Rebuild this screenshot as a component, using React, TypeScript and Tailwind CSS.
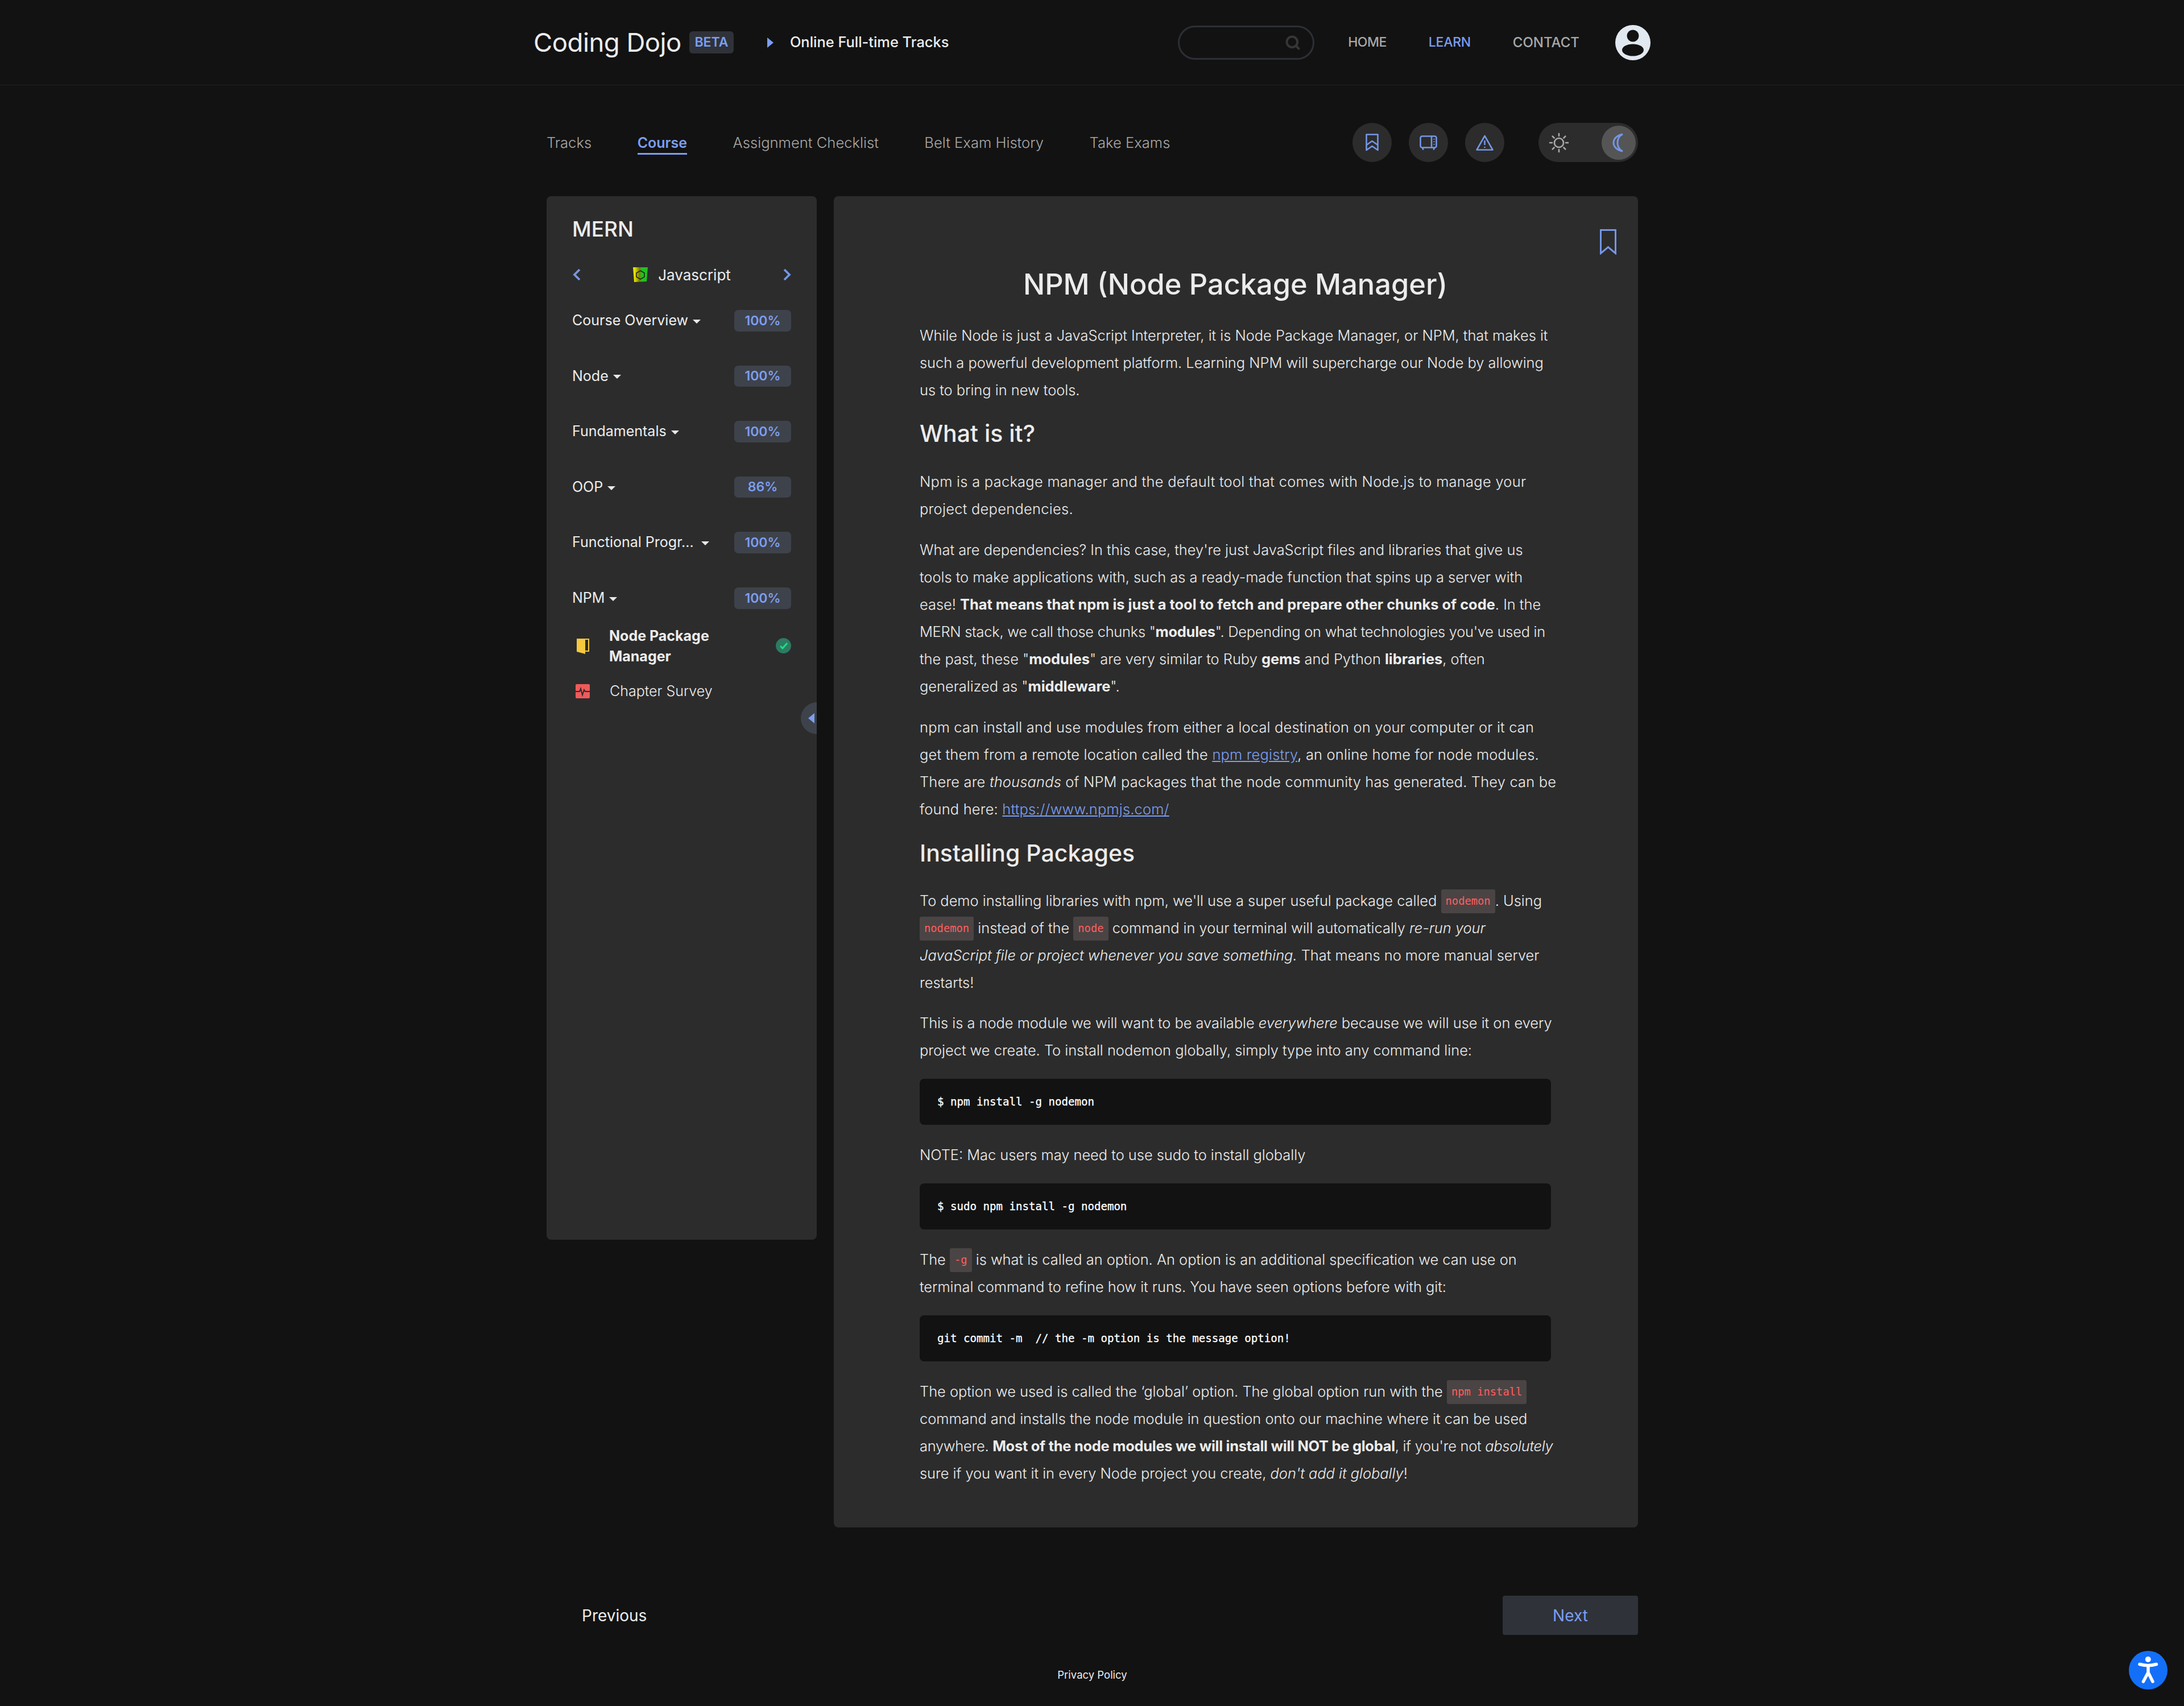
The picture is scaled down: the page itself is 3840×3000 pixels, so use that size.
import { Search } from "lucide-react";

const tabs = ["Tracks", "Course", "Assignment Checklist", "Belt Exam History", "Take Exams"];
const chapters = [
    { name: "Course Overview", pct: "100%" },
    { name: "Node", pct: "100%" },
    { name: "Fundamentals", pct: "100%" },
    { name: "OOP", pct: "86%" },
    { name: "Functional Progr...", pct: "100%" },
    { name: "NPM", pct: "100%" },
];

function Code({ children }: { children: React.ReactNode }) {
    return (
        <code className="inline-block h-[42px] align-middle -mt-[3px] rounded-[3px] bg-[#4b4444] px-[8px] font-['DejaVu_Sans_Mono',monospace] text-[18.8px] leading-[42px] tracking-normal font-normal text-[#ff5f5f] not-italic">
            {children}
        </code>
    );
}

function Block({ children }: { children: React.ReactNode }) {
    return (
        <pre className="mt-[26px] mb-[29px] flex h-[81px] items-center rounded-[8px] bg-[#121212] px-[31px] font-['DejaVu_Sans_Mono',monospace] text-[19.1px] font-normal tracking-normal text-white [-webkit-text-stroke:0.3px_#ffffff]">
            {children}
        </pre>
    );
}

export default function App() {
    return (
        <div className="flex h-[3000px] w-[3840px] flex-col overflow-hidden bg-[#121212] font-['Inter',sans-serif] text-[#ececec]">
            <header className="h-[150px] shrink-0 border-b border-[#222222]">
                <div className="mx-auto flex h-full w-[1964px] items-center">
                    <span className="text-[45.500px] leading-none tracking-[-0.5px]">Coding Dojo</span>
                    <span className="ml-[14px] flex h-[39px] w-[78px] items-center justify-center rounded-[6px] bg-[#2f3238] text-[23px] font-semibold text-[#7c9ef0]">BETA</span>
                    <span className="ml-[59px] h-0 w-0 border-y-[9px] border-l-[11px] border-y-transparent border-l-[#7c9ef0]" />
                    <span className="ml-[29px] text-[25.400px] font-medium">Online Full-time Tracks</span>
                    <div className="ml-auto flex h-[60px] w-[240px] items-center justify-end rounded-full border-[3px] border-[#2c2f36] pr-[21px]">
                        <Search size={28} strokeWidth={3.4} className="text-[#363636]" />
                    </div>
                    <nav className="ml-[59px] flex items-center gap-[74px] text-[24px] font-medium text-[#a8a8a8]">
                        <span className="text-[23px] tracking-[-0.5px]">HOME</span>
                        <span className="text-[23px] tracking-[-0.3px] text-[#7c9ef0]">LEARN</span>
                        <span>CONTACT</span>
                    </nav>
                    <svg className="ml-[63px]" width="62" height="62" viewBox="0 0 62 62">
                        <circle cx="31" cy="31" r="31" fill="#e2e8f0" />
                        <circle cx="31" cy="19" r="10.5" fill="#121212" />
                        <ellipse cx="31" cy="44" rx="19" ry="10.5" fill="#121212" />
                    </svg>
                </div>
            </header>

            <div className="mx-auto flex w-[1920px] flex-1 flex-col pl-[1px]">
                <div className="flex h-[195px] shrink-0 items-center pt-[6px]">
                    <div className="flex gap-[80.500px] pt-[4px] text-[25.600px] font-[350] text-[#a8a8a8]">
                        {tabs.map((tab) => (
                            <span key={tab} className={tab === "Course" ? "border-b-[3px] border-[#7c9ef0] text-[25px] font-semibold leading-[36px] text-[#7c9ef0]" : "leading-[36px]"}>
                                {tab}
                            </span>
                        ))}
                    </div>
                    <div className="ml-auto flex items-center gap-[30px]">
                        <div className="flex h-[69px] w-[69px] items-center justify-center rounded-full bg-[#2c2c2c]">
                            <svg width="23" height="31" viewBox="0 0 23 31" fill="none" stroke="#7496e6" strokeWidth="2.6" strokeLinejoin="round">
                                <path d="M1.500 1.500h20v27.500l-10-7-10 7z" />
                                <path d="M1.500 20l10-7 10 7" />
                            </svg>
                        </div>
                        <div className="flex h-[69px] w-[69px] items-center justify-center rounded-full bg-[#2c2c2c]">
                            <svg width="31" height="26" viewBox="0 0 31 26" fill="none" stroke="#7496e6" strokeWidth="2.6" strokeLinejoin="round">
                                <rect x="1.500" y="1.500" width="28" height="20" rx="3" />
                                <path d="M21 1.500v20M5 21.500l1.500 4M26 21.500l-1.500 4" />
                                <path d="M25.500 6v1.500M25.500 10.500v1.500M25.500 15v1.500" />
                            </svg>
                        </div>
                        <div className="flex h-[69px] w-[69px] items-center justify-center rounded-full bg-[#2c2c2c]">
                            <svg width="31" height="28" viewBox="0 0 31 28" fill="none" stroke="#7496e6" strokeWidth="2.6" strokeLinejoin="round">
                                <path d="M15.500 2L29.500 26.500H1.500z" />
                                <path d="M15.500 10v8M15.500 21v2" />
                            </svg>
                        </div>
                        <div className="ml-[30px] flex h-[69px] w-[175px] items-center justify-between rounded-full bg-[#2c2c2c] pl-[18px] pr-[4px]">
                            <svg width="36" height="36" viewBox="0 0 36 36" fill="none" stroke="#a8a8a8" strokeWidth="2.6" strokeLinecap="round">
                                <circle cx="18" cy="18" r="8" />
                                <path d="M18 2v4M18 30v4M2 18h4M30 18h4M6.700 6.700l2.800 2.800M26.500 26.500l2.800 2.800M6.700 29.300l2.800-2.800M26.500 9.500l2.800-2.800" />
                            </svg>
                            <div className="flex h-[60px] w-[60px] items-center justify-center rounded-full bg-[#555555]">
                                <svg width="36" height="36" viewBox="0 0 36 36" fill="none" stroke="#7496e6" strokeWidth="3">
                                    <path d="M25 3C15 5 9 11 9 18s6 13 16 15c-6-3-9-9-9-15s3-12 9-15z" />
                                </svg>
                            </div>
                        </div>
                    </div>
                </div>

                <div className="flex items-start gap-[30px]">
                    <aside className="relative h-[1835px] w-[475px] shrink-0 overflow-hidden rounded-[8px] bg-[#2c2c2c] pl-[45px] pr-[45px] pt-[33px] text-[25px]">
                        <h2 className="text-[37px] font-medium leading-[50px]">MERN</h2>
                        <div className="mt-[35px] flex h-[40px] items-center justify-between pl-[1px]">
                            <svg width="14" height="22" viewBox="0 0 14 22" fill="none" stroke="#7496e6" strokeWidth="3.800"><path d="M12 2L3 11l9 9" /></svg>
                            <div className="flex items-center gap-[18px]">
                                <svg width="26" height="26" viewBox="0 0 26 26">
                                    <defs>
                                        <linearGradient id="js" x1="0" x2="1" y1="0" y2="0">
                                            <stop offset="0.1" stopColor="#e6e600" />
                                            <stop offset="0.45" stopColor="#7a7a00" />
                                            <stop offset="0.55" stopColor="#22c020" />
                                        </linearGradient>
                                    </defs>
                                    <path d="M0 0h26l-2 25-22 1z" fill="url(#js)" />
                                    <path d="M13 6l7 4v7l-7 4-7-4v-7z" fill="none" stroke="#1c1c1c" strokeWidth="1.500" />
                                </svg>
                                <span className="text-[26px]">Javascript</span>
                            </div>
                            <svg width="14" height="22" viewBox="0 0 14 22" fill="none" stroke="#7496e6" strokeWidth="3.800"><path d="M2 2l9 9-9 9" /></svg>
                        </div>
                        <div className="mt-[42px] flex flex-col gap-[60px]">
                            {chapters.map((c) => (
                                <div key={c.name} className="flex h-[37.600px] items-center justify-between">
                                    <span className="flex items-center">
                                        {c.name}
                                        <span className={c.name.startsWith("Functional") ? "ml-[13px] mt-[3px] h-0 w-0 border-x-[7px] border-t-[7px] border-x-transparent border-t-[#e8e8e8]" : "ml-[8px] mt-[3px] h-0 w-0 border-x-[7px] border-t-[7px] border-x-transparent border-t-[#e8e8e8]"} />
                                    </span>
                                    <span className="flex h-[37.600px] w-[100px] items-center justify-center rounded-[7px] bg-[#3e424b] text-[23px] font-semibold text-[#7c9ef0]">{c.pct}</span>
                                </div>
                            ))}
                        </div>
                        <div className="mt-[29px] flex items-center">
                            <svg className="ml-[7px]" width="24" height="30" viewBox="0 0 24 30">
                                <path d="M1 2h15v27L1 25z" fill="#f5c93e" />
                                <path d="M16 3h6v21h-6" fill="none" stroke="#f5c93e" strokeWidth="2" />
                            </svg>
                            <span className="ml-[34px] font-bold leading-[36px]">Node Package<br />Manager</span>
                            <span className="ml-auto flex h-[27px] w-[27px] items-center justify-center rounded-full bg-[#2e7a62]">
                                <svg width="16" height="14" viewBox="0 0 16 14" fill="none" stroke="#1fdd84" strokeWidth="3"><path d="M2 7l4 4 8-9" /></svg>
                            </span>
                        </div>
                        <div className="mt-[25px] flex items-center">
                            <svg className="ml-[6px]" width="25" height="25" viewBox="0 0 25 25">
                                <rect width="25" height="25" rx="2" fill="#ef5a5a" />
                                <path d="M0 13h7l2-5 3 11 3-9 2 3h8" fill="none" stroke="#2c2c2c" strokeWidth="2" />
                            </svg>
                            <span className="ml-[35px] font-light">Chapter Survey</span>
                        </div>
                        <div className="absolute right-[-28px] top-[890px] flex h-[56px] w-[56px] items-center rounded-full bg-[#3e424b] pl-[13px]">
                            <span className="h-0 w-0 border-y-[9px] border-r-[11px] border-y-transparent border-r-[#7c9ef0]" />
                        </div>
                    </aside>

                    <main className="relative h-[2341px] w-[1414px] shrink-0 rounded-[8px] bg-[#2c2c2c] pl-[151px] pr-[153px] pt-[118px] text-[25.400px] leading-[48px]">
                        <svg className="absolute right-[38px] top-[58px]" width="29" height="45" viewBox="0 0 29 45" fill="none" stroke="#7496e6" strokeWidth="3">
                            <path d="M1.500 1.500h26v41l-13-11-13 11z" />
                        </svg>
                        <h1 className="text-center text-[50.500px] font-medium leading-[74px]">NPM (Node Package Manager)</h1>
                        <div className="whitespace-nowrap font-[350]">
                            <p className="mt-[29px]">While Node is just a JavaScript Interpreter, it is Node Package Manager, or NPM, that makes it<br />such a powerful development platform. Learning NPM will supercharge our Node by allowing<br />us to bring in new tools.</p>
                            <h2 className="mb-[31px] mt-[22px] text-[41px] font-medium leading-[60px]">What is it?</h2>
                            <p className="tracking-[0.3px]">Npm is a package manager and the default tool that comes with Node.js to manage your<br />project dependencies.</p>
                            <p className="mt-[24px]">What are dependencies? In this case, they're just JavaScript files and libraries that give us<br />tools to make applications with, such as a ready-made function that spins up a server with<br />ease! <b className="font-bold">That means that npm is just a tool to fetch and prepare other chunks of code</b>. In the<br /><span className="tracking-[-0.25px]">MERN stack, we call those chunks "<b className="font-bold">modules</b>". Depending on what technologies you've used in</span><br />the past, these "<b className="font-bold">modules</b>" are very similar to Ruby <b className="font-bold">gems</b> and Python <b className="font-bold">libraries</b>, often<br />generalized as "<b className="font-bold">middleware</b>".</p>
                            <p className="mt-[24px] tracking-[0.2px]">npm can install and use modules from either a local destination on your computer or it can<br />get them from a remote location called the <a className="text-[#7c9ef0] underline">npm registry</a>, an online home for node modules.<br />There are <i>thousands</i> of NPM packages that the node community has generated. They can be<br />found here: <a className="text-[#7c9ef0] underline">https://www.npmjs.com/</a></p>
                            <h2 className="mb-[30px] mt-[23px] text-[41px] font-medium leading-[60px]">Installing Packages</h2>
                            <p>To demo installing libraries with npm, we'll use a super useful package called <Code>nodemon</Code>. Using<br /><Code>nodemon</Code> instead of the <Code>node</Code> command in your terminal will automatically <i>re-run your</i><br /><i>JavaScript file or project whenever you save something.</i> That means no more manual server<br />restarts!</p>
                            <p className="mt-[23px]">This is a node module we will want to be available <i>everywhere</i> because we will use it on every<br />project we create. To install nodemon globally, simply type into any command line:</p>
                            <Block>$ npm install -g nodemon</Block>
                            <p>NOTE: Mac users may need to use sudo to install globally</p>
                            <Block>$ sudo npm install -g nodemon</Block>
                            <p>The <Code>-g</Code> is what is called an option. An option is an additional specification we can use on<br />terminal command to refine how it runs. You have seen options before with git:</p>
                            <Block>git commit -m  // the -m option is the message option!</Block>
                            <p>The option we used is called the ‘global’ option. The global option run with the <Code>npm install</Code><br />command and installs the node module in question onto our machine where it can be used<br /><span className="tracking-[-0.25px]">anywhere. <b className="font-bold">Most of the node modules we will install will NOT be global</b>, if you're not <i>absolutely</i></span><br />sure if you want it in every Node project you create, <i>don't add it globally</i>!</p>
                        </div>
                    </main>
                </div>

                <div className="mt-[120px] flex h-[69px] shrink-0 items-center justify-between pl-[62px]">
                    <span className="text-[28px]">Previous</span>
                    <span className="flex h-[69px] w-[238px] items-center justify-center rounded-[4px] bg-[#2f3238] text-[28px] text-[#7c9ef0]">Next</span>
                </div>
                <div className="mt-[57px] text-center text-[18.500px]">Privacy Policy</div>
            </div>

            <svg className="absolute left-[3743px] top-[2903px]" width="68" height="68" viewBox="0 0 68 68" fill="none" stroke="#ffffff" strokeWidth="5.500" strokeLinecap="round">
                <circle cx="34" cy="34" r="34" fill="#146ff8" stroke="none" />
                <circle cx="33.800" cy="15" r="5" fill="#ffffff" stroke="none" />
                <path d="M19 23.500Q34 28 48.500 23.500" />
                <path d="M34 26v12l-8.500 16M34 38l8 16" />
            </svg>
        </div>
    );
}
